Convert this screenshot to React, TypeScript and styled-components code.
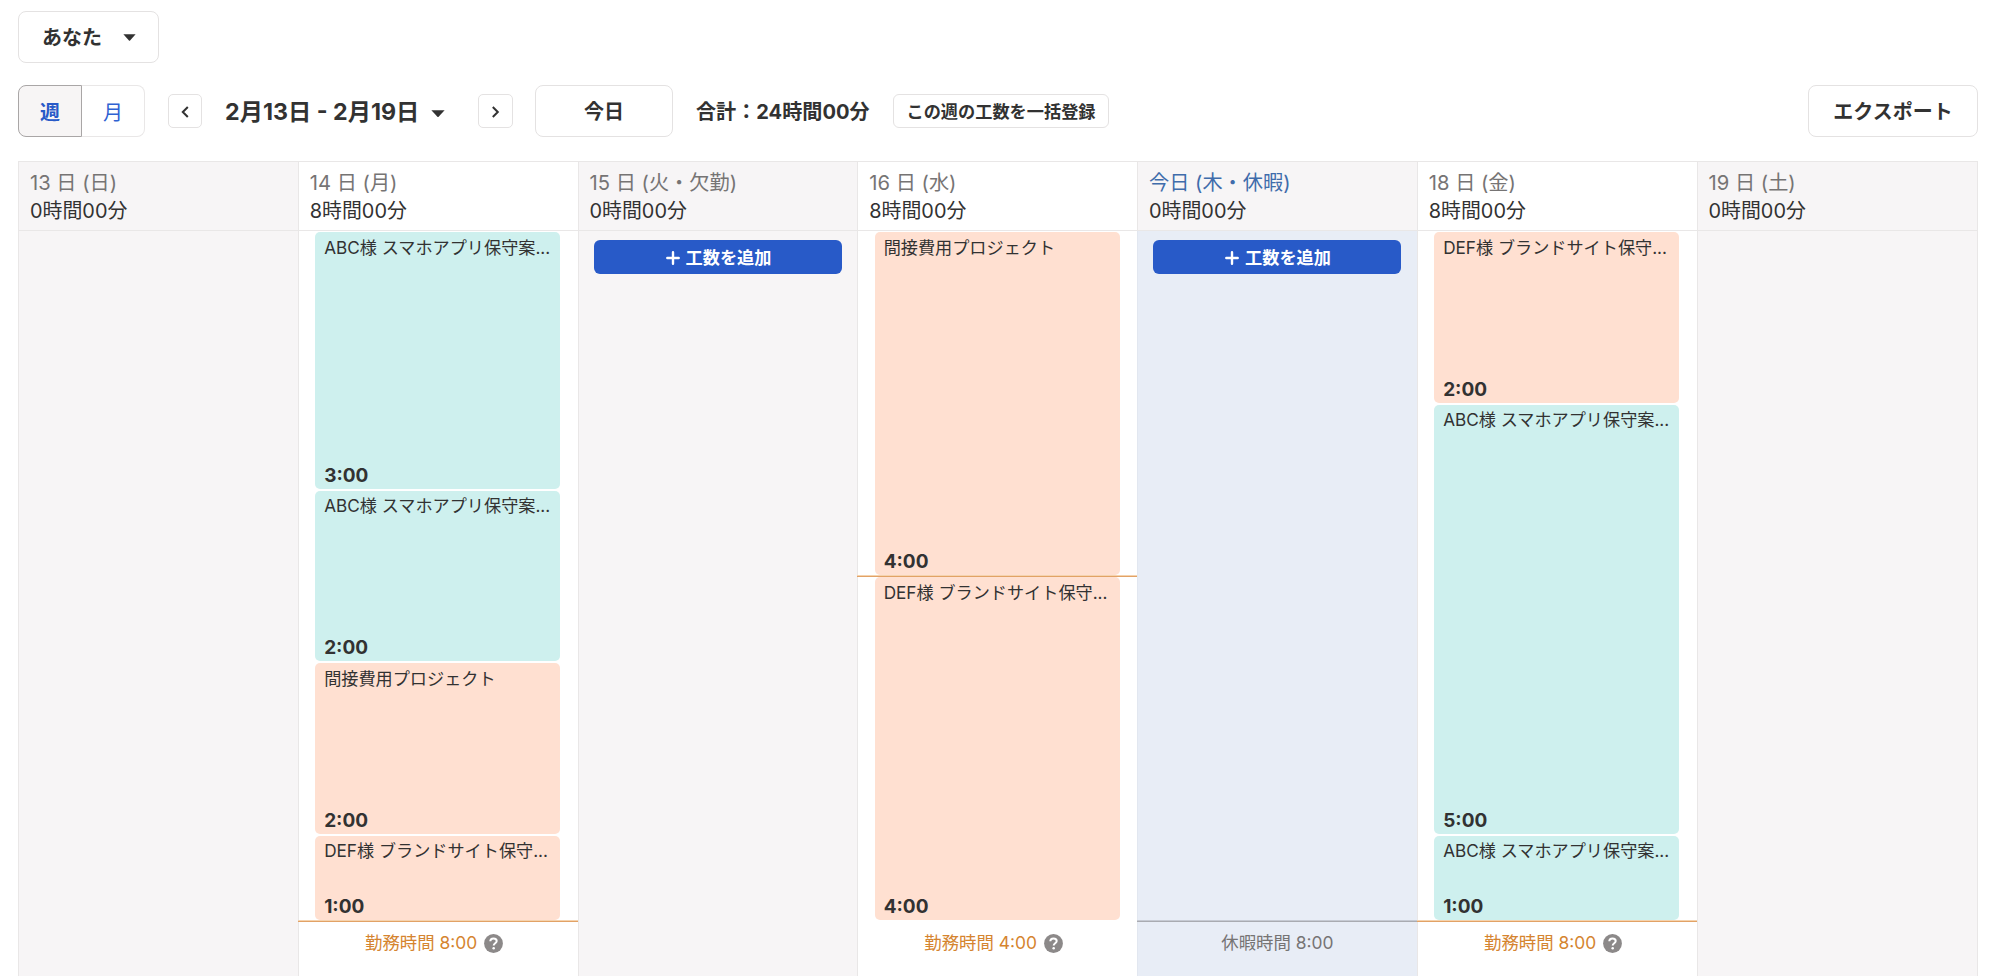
import React from 'react';
import styled, { createGlobalStyle } from 'styled-components';

const HOUR = 86.25;

const GlobalStyle = createGlobalStyle`
  *, *::before, *::after { box-sizing: border-box; }
  html, body { margin: 0; padding: 0; background: #fff; overflow: hidden; }
  body {
    font-family: Inter, "Noto Sans CJK JP", sans-serif;
    color: #323232;
  }
  button { font: inherit; color: inherit; margin: 0; padding: 0; }
`;

const Page = styled.div`
  display: flex;
  flex-direction: column;
  height: 976px;
  padding: 11px 21px 0 18px;
  overflow: hidden;
`;

const Button = styled.button<{ $w: number; $h?: number; $size?: number; $radius?: number }>`
  display: flex;
  flex: none;
  align-items: center;
  justify-content: center;
  width: ${(p) => p.$w}px;
  height: ${(p) => p.$h ?? 52}px;
  padding-top: 1px;
  border: 1px solid #e4e2e2;
  border-radius: ${(p) => p.$radius ?? 8}px;
  background: #fff;
  font-size: ${(p) => p.$size ?? 20}px;
  font-weight: 700;
  line-height: 1;
  white-space: nowrap;
`;

const UserButton = styled(Button)`
  gap: 21px;
  padding-left: 1px;
`;

const BulkButton = styled(Button)`
  padding-top: 2px;
`;

const NextButton = styled(Button)`
  margin-right: 22px;
`;

const Toolbar = styled.div`
  display: flex;
  align-items: center;
  height: 52px;
  margin: 22px 0 24px;
`;

const Segments = styled.div`
  display: flex;
  width: 127px;
  height: 52px;
  margin-right: 23px;
`;

const Segment = styled.button<{ $active?: boolean }>`
  width: ${(p) => (p.$active ? 64 : 63)}px;
  padding-top: 3px;
  border: 1px solid ${(p) => (p.$active ? '#a9a6a6' : '#e9e7e7')};
  border-left-width: ${(p) => (p.$active ? 1 : 0)}px;
  border-radius: ${(p) => (p.$active ? '8px 0 0 8px' : '0 8px 8px 0')};
  background: ${(p) => (p.$active ? '#f7f5f5' : '#fff')};
  color: ${(p) => (p.$active ? '#285ac8' : '#2f62d2')};
  font-size: 20px;
  font-weight: ${(p) => (p.$active ? 700 : 400)};
  line-height: 1;
`;

const Period = styled.button`
  display: flex;
  align-items: center;
  justify-content: space-between;
  width: 220px;
  margin: 0 33px 0 23px;
  padding-top: 1px;
  border: 0;
  background: none;
  font-size: 23.25px;
  font-weight: 700;
  line-height: 1;
  white-space: nowrap;

  svg {
    margin-top: 4px;
  }
`;

const Total = styled.div`
  width: 174px;
  margin: 0 23px;
  padding-top: 3px;
  font-size: 20.1px;
  font-weight: 700;
  line-height: 1;
  white-space: nowrap;
`;

const Spacer = styled.div`
  flex: 1;
`;

const Week = styled.div`
  display: grid;
  grid-template-columns: repeat(6, 279.75px) 1fr;
  flex: 1;
  border-top: 1px solid #e9e7e7;
  border-right: 1px solid #e9e7e7;
`;

const Column = styled.section`
  display: flex;
  flex-direction: column;
  min-width: 0;
`;

const ColumnHead = styled.header<{ $off?: boolean }>`
  height: 69px;
  padding: 6px 0 0 11px;
  border-left: 1px solid #e9e7e7;
  border-bottom: 1px solid #e9e7e7;
  background: ${(p) => (p.$off ? '#f7f5f6' : '#fff')};
  font-size: 19.9px;
  line-height: 29px;
  white-space: nowrap;
`;

const DateLabel = styled.div<{ $today?: boolean }>`
  color: ${(p) => (p.$today ? '#3f6cab' : '#767474')};
  font-size: 20.2px;
`;

const ColumnBody = styled.div<{ $tone: Tone }>`
  position: relative;
  flex: 1;
  padding: 1px 0 0 16.4px;
  border-left: 1px solid ${(p) => (p.$tone === 'leave' ? '#e2e7f0' : '#e9e7e7')};
  background: ${(p) => ({ work: '#fff', off: '#f7f5f6', leave: '#e8edf6' })[p.$tone]};
`;

const Entry = styled.article<{ $hours: number; $color: Project }>`
  display: flex;
  flex-direction: column;
  justify-content: space-between;
  width: 245px;
  height: ${(p) => p.$hours * HOUR - 2}px;
  margin-bottom: 2px;
  padding: 5.5px 8px 3px 9px;
  border-radius: 5px;
  background: ${(p) => (p.$color === 'teal' ? '#cef0ee' : '#ffe0d1')};
`;

const EntryTitle = styled.div`
  font-size: 17.15px;
  line-height: 20px;
  white-space: nowrap;
`;

const EntryTime = styled.div`
  font-size: 19px;
  font-weight: 700;
  line-height: 20px;
`;

const AddButton = styled.button`
  display: flex;
  align-items: center;
  justify-content: center;
  gap: 6px;
  width: 248px;
  height: 34px;
  margin: 8px 0 0 -1.4px;
  padding: 1px 0 0 2px;
  border: 0;
  border-radius: 6px;
  background: #285ac8;
  color: #fff;
  font-size: 17.2px;
  font-weight: 700;
  line-height: 1;
`;

const LimitLine = styled.div<{ $hours: number; $leave?: boolean }>`
  position: absolute;
  top: ${(p) => Math.round(p.$hours * HOUR) - 1}px;
  left: -1px;
  right: 0;
  height: 2px;
  border-top: 1px solid ${(p) => (p.$leave ? '#c6cad3' : '#f5d3ae')};
  border-bottom: 1px solid ${(p) => (p.$leave ? '#a9abb1' : '#e2a266')};
`;

const Note = styled.div<{ $leave?: boolean }>`
  position: absolute;
  top: 701px;
  left: 0;
  right: ${(p) => (p.$leave ? 0 : 8)}px;
  display: flex;
  align-items: center;
  justify-content: center;
  gap: 7px;
  height: 22px;
  color: ${(p) => (p.$leave ? '#767474' : '#d5842f')};
  font-size: 17.4px;
  line-height: 22px;
  white-space: nowrap;
`;

const Caret = ({ size = 13 }: { size?: number }) => (
  <svg width={size} height={size / 2 + 0.5} viewBox="0 0 14 7">
    <path d="M.4 0h13.2L7.6 6.6a.9.9 0 0 1-1.2 0z" fill="currentColor" />
  </svg>
);

const Chevron = ({ flip }: { flip?: boolean }) => (
  <svg width="8" height="12" viewBox="0 0 8 12" fill="none" stroke="currentColor" strokeWidth="2">
    <path d={flip ? 'M.8 1l5 5-5 5' : 'M6.8 1l-5 5 5 5'} />
  </svg>
);

const Plus = () => (
  <svg width="14" height="14" viewBox="0 0 14 14" stroke="currentColor" strokeWidth="2.4" strokeLinecap="round">
    <path d="M7 1.3v11.4M1.3 7h11.4" />
  </svg>
);

const Help = () => (
  <svg width="19" height="19" viewBox="0 0 19 19">
    <circle cx="9.5" cy="9.5" r="9.4" fill="#8c8989" />
    <path
      d="M6.3 7.3c0-1.8 1.3-2.9 3.2-2.9s3.2 1.1 3.2 2.7c0 2.1-3 2.3-3 4.5"
      fill="none"
      stroke="#fff"
      strokeWidth="2"
    />
    <circle cx="9.7" cy="14.3" r="1.25" fill="#fff" />
  </svg>
);

type Tone = 'work' | 'off' | 'leave';
type Project = 'teal' | 'orange';

interface Work {
  title: string;
  hours: number;
  color: Project;
}

interface Day {
  label: string;
  total: string;
  tone: Tone;
  today?: boolean;
  addable?: boolean;
  works?: Work[];
  limit?: { at: number; text: string };
}

const ABC = 'ABC様 スマホアプリ保守案...';
const DEF = 'DEF様 ブランドサイト保守...';
const INDIRECT = '間接費用プロジェクト';

const days: Day[] = [
  { label: '13 日 (日)', total: '0時間00分', tone: 'off' },
  {
    label: '14 日 (月)',
    total: '8時間00分',
    tone: 'work',
    works: [
      { title: ABC, hours: 3, color: 'teal' },
      { title: ABC, hours: 2, color: 'teal' },
      { title: INDIRECT, hours: 2, color: 'orange' },
      { title: DEF, hours: 1, color: 'orange' },
    ],
    limit: { at: 8, text: '勤務時間 8:00' },
  },
  { label: '15 日 (火・欠勤)', total: '0時間00分', tone: 'off', addable: true },
  {
    label: '16 日 (水)',
    total: '8時間00分',
    tone: 'work',
    works: [
      { title: INDIRECT, hours: 4, color: 'orange' },
      { title: DEF, hours: 4, color: 'orange' },
    ],
    limit: { at: 4, text: '勤務時間 4:00' },
  },
  {
    label: '今日 (木・休暇)',
    total: '0時間00分',
    tone: 'leave',
    today: true,
    addable: true,
    limit: { at: 8, text: '休暇時間 8:00' },
  },
  {
    label: '18 日 (金)',
    total: '8時間00分',
    tone: 'work',
    works: [
      { title: DEF, hours: 2, color: 'orange' },
      { title: ABC, hours: 5, color: 'teal' },
      { title: ABC, hours: 1, color: 'teal' },
    ],
    limit: { at: 8, text: '勤務時間 8:00' },
  },
  { label: '19 日 (土)', total: '0時間00分', tone: 'off' },
];

const DayColumn = ({ day }: { day: Day }) => {
  const leave = day.tone === 'leave';
  return (
    <Column>
      <ColumnHead $off={day.tone !== 'work'}>
        <DateLabel $today={day.today}>{day.label}</DateLabel>
        <div>{day.total}</div>
      </ColumnHead>
      <ColumnBody $tone={day.tone}>
        {day.addable && (
          <AddButton>
            <Plus />
            工数を追加
          </AddButton>
        )}
        {day.works?.map((work, i) => (
          <Entry key={i} $hours={work.hours} $color={work.color}>
            <EntryTitle>{work.title}</EntryTitle>
            <EntryTime>{`${work.hours}:00`}</EntryTime>
          </Entry>
        ))}
        {day.limit && (
          <>
            <LimitLine $hours={day.limit.at} $leave={leave} />
            <Note $leave={leave}>
              {day.limit.text}
              {!leave && <Help />}
            </Note>
          </>
        )}
      </ColumnBody>
    </Column>
  );
};

export default function App() {
  return (
    <Page>
      <GlobalStyle />
      <UserButton $w={141}>
        あなた
        <Caret />
      </UserButton>
      <Toolbar>
        <Segments>
          <Segment $active>週</Segment>
          <Segment>月</Segment>
        </Segments>
        <Button $w={34} $h={34} $radius={5}>
          <Chevron />
        </Button>
        <Period>
          2月13日 - 2月19日
          <Caret size={14} />
        </Period>
        <NextButton $w={35} $h={34} $radius={5}>
          <Chevron flip />
        </NextButton>
        <Button $w={138}>今日</Button>
        <Total>合計：24時間00分</Total>
        <BulkButton $w={216} $h={34} $size={17.2} $radius={6}>
          この週の工数を一括登録
        </BulkButton>
        <Spacer />
        <Button $w={170}>エクスポート</Button>
      </Toolbar>
      <Week>
        {days.map((day) => (
          <DayColumn key={day.label} day={day} />
        ))}
      </Week>
    </Page>
  );
}
